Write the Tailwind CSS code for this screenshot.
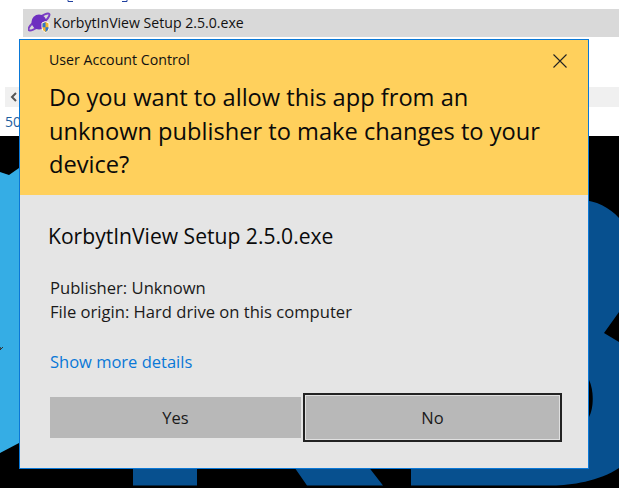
<!DOCTYPE html>
<html lang="en">

<head>
  <meta charset="UTF-8">
  <title>User Account Control</title>
  <script src="https://cdn.jsdelivr.net/npm/@tailwindcss/browser@4"></script>
</head>

<body class="bg-white overflow-hidden font-['Open_Sans','Noto_Sans',sans-serif]">
  <div class="relative w-[619px] h-[488px] overflow-hidden">

    <!-- Browser page behind the dialog -->
    <div class="relative h-[136px] pt-[9px]">
      <svg class="absolute left-0 top-0" width="140" height="3" viewBox="0 0 140 3"><path d="M68 0v1.500h5M122 1.500h5V0" fill="none" stroke="#1f3f9f"/></svg>
      <div class="ml-[23px] h-[28px] bg-[#d9d9d9] flex items-center pl-[5px] gap-[1px]">
        <svg width="24" height="24" viewBox="0 0 24 24">
          <ellipse cx="11" cy="11" rx="13" ry="3.5" transform="rotate(-38 11 11)" fill="none" stroke="#7b3fc4" stroke-width="2"/>
          <circle cx="11" cy="11" r="7.5" fill="#6d2fc0"/>
          <path d="M14 12l3.500-1.500 3.500 1.500v4c0 3-1.500 4.500-3.500 5.500-2-1-3.500-2.500-3.500-5.500z" fill="#f2b632" stroke="#fff"/>
          <path d="M14.500 12.500l3-1.300v5h-3zM17.500 16.200h3c0 2.500-1.200 3.800-3 4.700z" fill="#2f76c8"/>
        </svg>
        <span class="text-[14.1px] text-[#111]">KorbytInView Setup 2.5.0.exe</span>
      </div>
      <div class="mt-[50px] ml-[5px] h-[20px] bg-[#f0f0f0] flex items-center pl-[4px]">
        <svg width="10" height="12" viewBox="0 0 10 12"><path d="M7 2L3 6l4 4" fill="none" stroke="#555" stroke-width="2"/></svg>
      </div>
      <div class="pl-[5px] mt-[5px] text-[14px] leading-[20px] text-[#1f5f9f]">50</div>
    </div>

    <!-- Dark poster behind the dialog -->
    <div class="relative h-[352px] bg-black">
      <svg class="absolute left-0 top-0" width="619" height="352" viewBox="0 0 619 352">
        <path d="M0 36L9 39L19 32H30V303L19 307L0 317z" fill="#35ade5"/>
        <path d="M0 214L3 211M0 211L1 213" stroke="#333" fill="none"/>
        <path d="M580 64C596 64 610 72 619 82V176L604 197L619 206V332C600 345 570 349.500 553 349.500H411V325H580z" fill="#07508f"/>
        <path d="M589 244C594 254 594 272 589 281z" fill="#000"/>
        <path d="M133 325H197V349.500H133zM290 325H364L383 349.500H307z" fill="#07508f"/>
      </svg>
    </div>

    <!-- UAC dialog -->
    <div class="absolute left-[19px] top-[39px] w-[570px] h-[430px] border border-[#0a78d7] bg-[#e5e5e5] flex flex-col">
      <div class="h-[155px] bg-[#ffd05c] pl-[29px] relative shrink-0">
        <div class="pt-[9px] text-[14.2px] leading-[22px] text-[#111]">User Account Control</div>
        <div class="mt-[10px] text-[23.65px] leading-[33.5px] text-[#0a0a0a] whitespace-nowrap">Do you want to allow this app from an<br>unknown publisher to make changes to your<br>device?</div>
        <svg class="absolute right-[21px] top-[14px]" width="14" height="14" viewBox="0 0 14 14"><path d="M.5.500l13 13M13.500.500l-13 13" stroke="#222" stroke-width="1.100"/></svg>
      </div>
      <div class="flex-1 pl-[30px]">
        <div class="-ml-[2px] mt-[25px] text-[21.1px] leading-[32px] text-[#0a0a0a]">KorbytInView Setup 2.5.0.exe</div>
        <div class="mt-[24px] text-[16.6px] leading-[24px] text-[#1a1a1a]">Publisher: Unknown<br>File origin: Hard drive on this computer</div>
        <div class="mt-[26px] text-[16.5px] leading-[24px] text-[#0a78d7]">Show more details</div>
        <div class="mt-[19px] grid grid-cols-[251px_259px] gap-[2px]">
          <div class="mt-[4px] h-[41px] pt-[2px] bg-[#b8b8b8] flex items-center justify-center text-[16.5px] text-[#1a1a1a]">Yes</div>
          <div class="h-[49px] pt-[2px] border-2 border-[#222] shadow-[inset_0_0_0_1px_#e0e0e0] bg-[#b8b8b8] flex items-center justify-center text-[16.5px] text-[#1a1a1a]">No</div>
        </div>
      </div>
    </div>
  </div>
</body>

</html>
